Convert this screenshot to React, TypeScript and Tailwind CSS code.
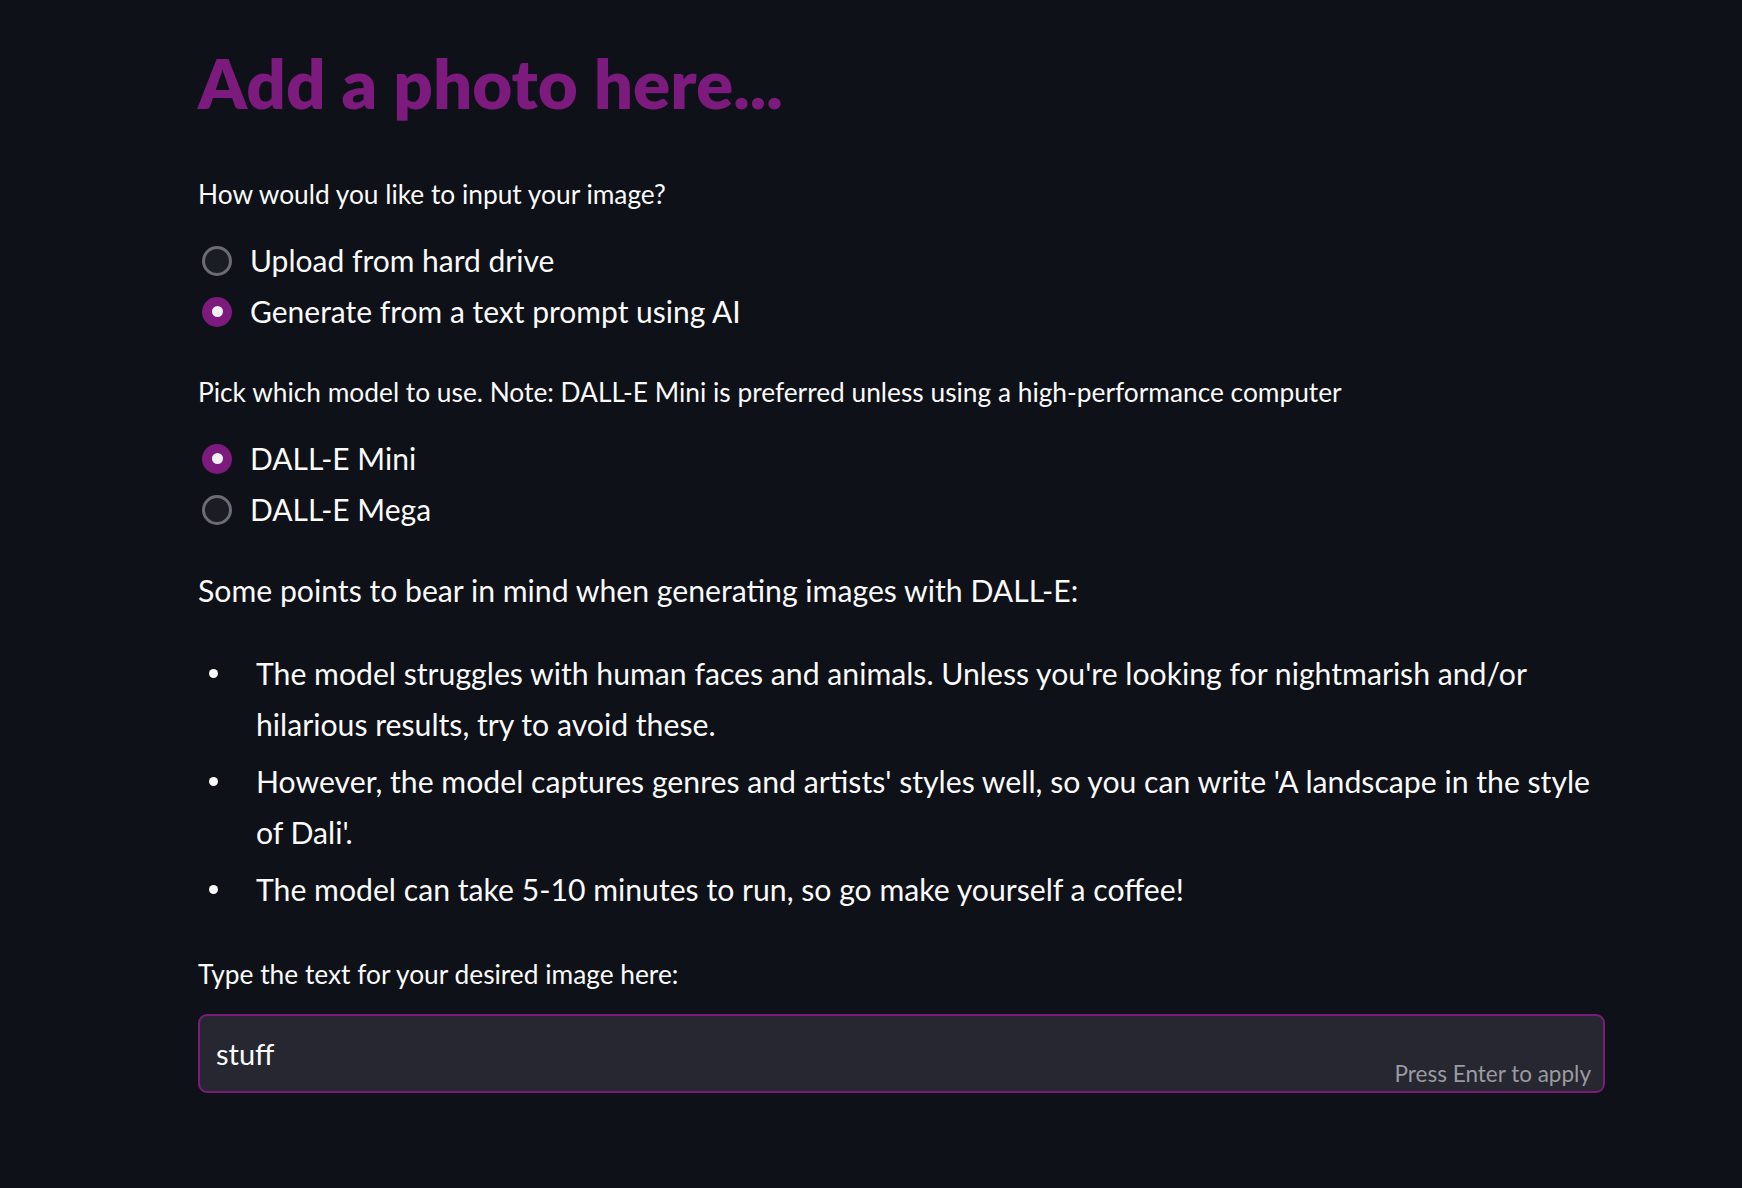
import { useState } from 'react'

function Radio({ label, checked }: { label: string; checked: boolean }) {
  return (
    <label className="flex h-[51px] items-center gap-[18px] pl-[4px]">
      {checked ? (
        <span className="flex h-[30px] w-[30px] items-center justify-center rounded-full bg-[#7d1a7e]">
          <span className="h-[11px] w-[11px] rounded-full bg-[#f0f0f5]" />
        </span>
      ) : (
        <span className="h-[30px] w-[30px] rounded-full border-[3px] border-[#6c6d73] bg-[#1b1d25]" />
      )}
      <span className="text-[30px] text-[#fafafa]">{label}</span>
    </label>
  )
}

function FieldLabel({ children }: { children: string }) {
  return <p className="text-[26.3px] leading-[34px] text-[#fafafa]">{children}</p>
}

const tips = [
  "The model struggles with human faces and animals. Unless you're looking for nightmarish and/or hilarious results, try to avoid these.",
  "However, the model captures genres and artists' styles well, so you can write 'A landscape in the style of Dali'.",
  'The model can take 5-10 minutes to run, so go make yourself a coffee!',
]

export default function App() {
  const [prompt, setPrompt] = useState('stuff')

  return (
    <div
      className="min-h-[1188px] bg-[#0e1117] text-[#fafafa]"
      style={{ fontFamily: 'Lato, "Open Sans", sans-serif' }}
    >
      <div className="ml-[198px] w-[1407px] pt-[35px]">
        <h1 className="text-[69px] font-extrabold leading-[96px] text-[#7d1a7e]">Add a photo here...</h1>

        <div className="mt-[46px]">
          <FieldLabel>How would you like to input your image?</FieldLabel>
          <div className="mt-[24px]">
            <Radio label="Upload from hard drive" checked={false} />
            <Radio label="Generate from a text prompt using AI" checked />
          </div>
        </div>

        <div className="mt-[38px]">
          <FieldLabel>
            Pick which model to use. Note: DALL-E Mini is preferred unless using a high-performance computer
          </FieldLabel>
          <div className="mt-[24px]">
            <Radio label="DALL-E Mini" checked />
            <Radio label="DALL-E Mega" checked={false} />
          </div>
        </div>

        <p className="mt-[30px] text-[30.2px] leading-[51px]">
          Some points to bear in mind when generating images with DALL-E:
        </p>

        <ul className="mt-[32px] text-[30.2px] leading-[51px]">
          {tips.map((t) => (
            <li key={t} className="mb-[6px] flex">
              <span className="flex h-[51px] w-[58px] shrink-0 items-center pl-[11px]">
                <span className="h-[9px] w-[9px] rounded-full bg-[#fafafa]" />
              </span>
              <span>{t}</span>
            </li>
          ))}
        </ul>

        <div className="mt-[42px]">
          <FieldLabel>Type the text for your desired image here:</FieldLabel>
          <div className="relative mt-[23px] h-[79px] rounded-[9px] border-2 border-[#7d1a7e] bg-[#262730]">
            <input
              autoFocus
              value={prompt}
              onChange={(e) => setPrompt(e.target.value)}
              className="h-full w-full bg-transparent px-[16px] text-[29px] text-[#fafafa] caret-white outline-none"
            />
            <span className="absolute bottom-[0px] right-[12px] text-[22.5px] text-[#9a9ba0]">
              Press Enter to apply
            </span>
          </div>
        </div>
      </div>
    </div>
  )
}
